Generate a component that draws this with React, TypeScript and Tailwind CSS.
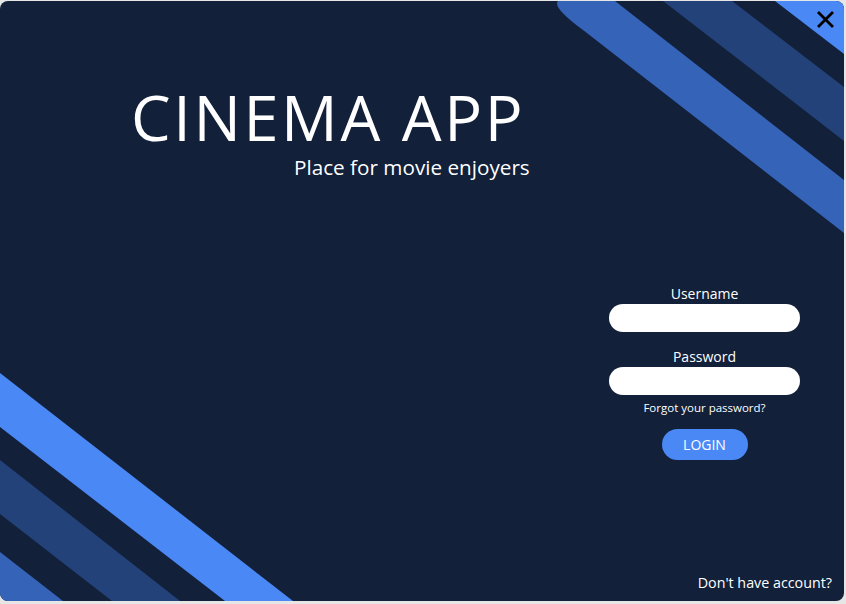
import React from "react";

export default function App() {
  return (
    <div className="w-[846px] h-[604px] bg-[#e6e6e6] pt-px" style={{ fontFamily: '"Open Sans", "Noto Sans", sans-serif' }}>
      <div className="relative w-[844px] h-[600px] rounded-lg bg-[#12203a] overflow-hidden flex flex-col">
        <svg className="absolute inset-0" width="844" height="600" viewBox="0 0 844 600">
          <polygon points="775,0 844,0 844,53" fill="#4a88f5" />
          <polygon points="663,0 732,0 844,86 844,140" fill="#23427a" />
          <path d="M 558 0 L 615 0 L 844 179 L 844 232 L 583 29 Q 552 6 558 0 Z" fill="#3563b8" />
          <polygon points="0,372 0,426 225,600 293,600" fill="#4a88f5" />
          <polygon points="0,459 0,513 112,600 180,600" fill="#23427a" />
          <polygon points="0,551 0,600 63,600" fill="#3563b8" />
        </svg>

        <button className="absolute top-[8px] right-[8px] w-[21px] h-[21px] flex items-center justify-center">
          <svg width="19" height="19" viewBox="0 0 19 19">
            <path d="M2 2 L17 17 M17 2 L2 17" stroke="#000" strokeWidth="2.8" strokeLinecap="butt" />
          </svg>
        </button>

        <div className="relative pt-[84px] pl-[131px] text-white">
          <div className="text-[63px] leading-[64px] tracking-[2.6px]">CINEMA APP</div>
          <div className="ml-[163px] mt-[5px] text-[20.7px] leading-[26px]">Place for movie enjoyers</div>
        </div>

        <div className="relative ml-[609px] mt-[105px] w-[191px] flex flex-col items-center text-white">
          <label className="text-[14px] leading-[18px]">Username</label>
          <input className="mt-[1px] w-full h-[28px] rounded-full bg-white outline-none px-3 text-black" />
          <label className="mt-[16px] text-[14px] leading-[18px]">Password</label>
          <input type="password" className="mt-[1px] w-full h-[28px] rounded-full bg-white outline-none px-3 text-black" />
          <div className="mt-[5px] text-[11.5px] leading-[16px]">Forgot your password?</div>
          <button className="mt-[13px] w-[86px] h-[31px] rounded-full bg-[#4a88f5] text-white text-[14px]">LOGIN</button>
        </div>

        <div className="relative mt-auto self-end pr-[12px] pb-[8px] text-white text-[14.3px] leading-[20px]">Don't have account?</div>
      </div>
    </div>
  );
}
